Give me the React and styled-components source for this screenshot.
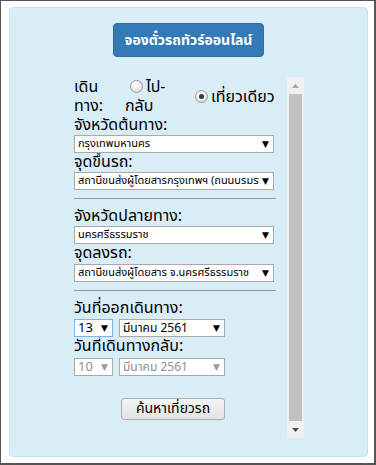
import React from 'react';
import styled, { createGlobalStyle } from 'styled-components';

const GlobalStyle = createGlobalStyle`
  html, body {
    margin: 0;
    padding: 0;
    background: #ffffff;
  }
  * {
    box-sizing: border-box;
  }
`;

const thai = `Tahoma, "Noto Sans Thai", "Noto Sans", "DejaVu Sans", sans-serif`;

const Frame = styled.div`
  width: 376px;
  height: 465px;
  border-style: solid;
  border-color: #555555;
  border-width: 1px 2px 2px 1px;
  padding: 6px 6px 6px 8px;
  background: #ffffff;
  font-family: ${thai};
`;

const Panel = styled.div`
  height: 100%;
  background: #d9edf7;
  border: 1px solid #bce8f1;
  border-radius: 4px;
  padding: 15px 0 0;
  display: flex;
  flex-direction: column;
  align-items: center;
`;

const BookButton = styled.div`
  width: 151px;
  height: 34px;
  border-radius: 4px;
  background: #337ab7;
  border: 1px solid #2e6da4;
  color: #ffffff;
  font-size: 14px;
  font-weight: bold;
  display: flex;
  align-items: center;
  justify-content: center;
`;

const ScrollBox = styled.div`
  margin-top: 20px;
  width: 234px;
  height: 361px;
  display: flex;
  gap: 11px;
  padding-left: 4px;
  margin-left: -3px;
`;

const Form = styled.div`
  width: 202px;
  display: flex;
  flex-direction: column;
  padding-top: 1px;
`;

const TripGrid = styled.div`
  display: grid;
  grid-template-columns: 51px 65px 1fr;
  align-items: center;
  font-size: 16px;
  line-height: 19px;
  color: #000;
`;

const Cell = styled.div`
  align-self: start;
`;

const Radio = styled.span`
  display: inline-block;
  width: 13px;
  height: 13px;
  border-radius: 50%;
  border: 1px solid #9a9a9a;
  background: radial-gradient(circle at 40% 35%, #ffffff 0%, #e6e6e6 60%, #d0d0d0 100%);
  margin: 0 3px 0 5px;
  vertical-align: -1px;
  position: relative;

  &::after {
    content: '';
    display: ${({ checked }) => (checked ? 'block' : 'none')};
    position: absolute;
    left: 3px;
    top: 3px;
    width: 5px;
    height: 5px;
    border-radius: 50%;
    background: #3a3a3a;
  }
`;

const Label = styled.div`
  font-size: 16px;
  line-height: 19px;
  height: ${({ h }) => h || 19}px;
  color: #000;
`;

const SelectBox = styled.div`
  position: relative;
  width: ${({ w }) => w || 200}px;
  height: 18px;
  border: 1px solid ${({ focused }) => (focused ? '#7eb4ea' : '#a9a9a9')};
  background: #ffffff;
  color: ${({ disabled }) => (disabled ? '#8f8f8f' : '#000000')};
  font-size: ${({ fs }) => fs || 11}px;
  line-height: 16px;
  padding: 0 14px 0 3px;

  &::after {
    content: '▼';
    position: absolute;
    right: 4px;
    top: 0;
    font-size: 9px;
    line-height: 16px;
    color: ${({ disabled }) => (disabled ? '#999999' : '#000000')};
  }
`;

const Value = styled.span`
  display: block;
  white-space: nowrap;
  overflow-x: clip;
  overflow-y: visible;
`;

const Divider = styled.hr`
  width: 202px;
  margin: 8px 0;
  border: 0;
  border-top: 1px solid #999999;
`;

const DateRow = styled.div`
  display: flex;
  gap: 6px;
`;

const SearchRow = styled.div`
  display: flex;
  justify-content: center;
  margin-top: 22px;
  padding-right: 4px;
`;

const SearchButton = styled.div`
  width: 104px;
  height: 22px;
  border: 1px solid #adadad;
  border-radius: 3px;
  background: linear-gradient(#f5f5f5, #e3e3e3);
  font-size: 14px;
  line-height: 20px;
  text-align: center;
  color: #000;
`;

const ScrollBar = styled.div`
  width: 17px;
  height: 100%;
  background: #f0f0f0;
  display: flex;
  flex-direction: column;
  align-items: center;
`;

const Arrow = styled.div`
  height: 17px;
  display: flex;
  align-items: center;
  justify-content: center;
`;

const Thumb = styled.div`
  flex: 1;
  width: 13px;
  background: #c1c1c1;
`;

const Triangle = ({ up, color }) => (
  <svg width="7" height="4" viewBox="0 0 7 4">
    <path d={up ? 'M0 4 L3.5 0 L7 4 Z' : 'M0 0 L7 0 L3.5 4 Z'} fill={color} />
  </svg>
);

const Select = ({ children, ...rest }) => (
  <SelectBox {...rest}>
    <Value>{children}</Value>
  </SelectBox>
);

export default function App() {
  return (
    <>
      <GlobalStyle />
      <Frame>
        <Panel>
          <BookButton>จองตั๋วรถทัวร์ออนไลน์</BookButton>
          <ScrollBox>
            <Form>
              <TripGrid>
                <Cell>เดิน<br />ทาง:</Cell>
                <Cell>
                  <Radio />ไป-<br />กลับ
                </Cell>
                <div>
                  <Radio checked />เที่ยวเดียว
                </div>
              </TripGrid>
              <Label>จังหวัดต้นทาง:</Label>
              <Select>กรุงเทพมหานคร</Select>
              <Label>จุดขึ้นรถ:</Label>
              <Select>สถานีขนส่งผู้โดยสารกรุงเทพฯ (ถนนบรมราชชนนี)</Select>
              <Divider />
              <Label>จังหวัดปลายทาง:</Label>
              <Select>นครศรีธรรมราช</Select>
              <Label h={20}>จุดลงรถ:</Label>
              <Select>สถานีขนส่งผู้โดยสาร จ.นครศรีธรรมราช</Select>
              <Divider />
              <Label h={20}>วันที่ออกเดินทาง:</Label>
              <DateRow>
                <Select w={39} fs={13} focused>13</Select>
                <Select w={106} fs={12}>มีนาคม 2561</Select>
              </DateRow>
              <Label h={21}>วันที่เดินทางกลับ:</Label>
              <DateRow>
                <Select w={39} fs={13} disabled>10</Select>
                <Select w={106} fs={12} disabled>มีนาคม 2561</Select>
              </DateRow>
              <SearchRow>
                <SearchButton>ค้นหาเที่ยวรถ</SearchButton>
              </SearchRow>
            </Form>
            <ScrollBar>
              <Arrow><Triangle up color="#a3a3a3" /></Arrow>
              <Thumb />
              <Arrow><Triangle color="#505050" /></Arrow>
            </ScrollBar>
          </ScrollBox>
        </Panel>
      </Frame>
    </>
  );
}
